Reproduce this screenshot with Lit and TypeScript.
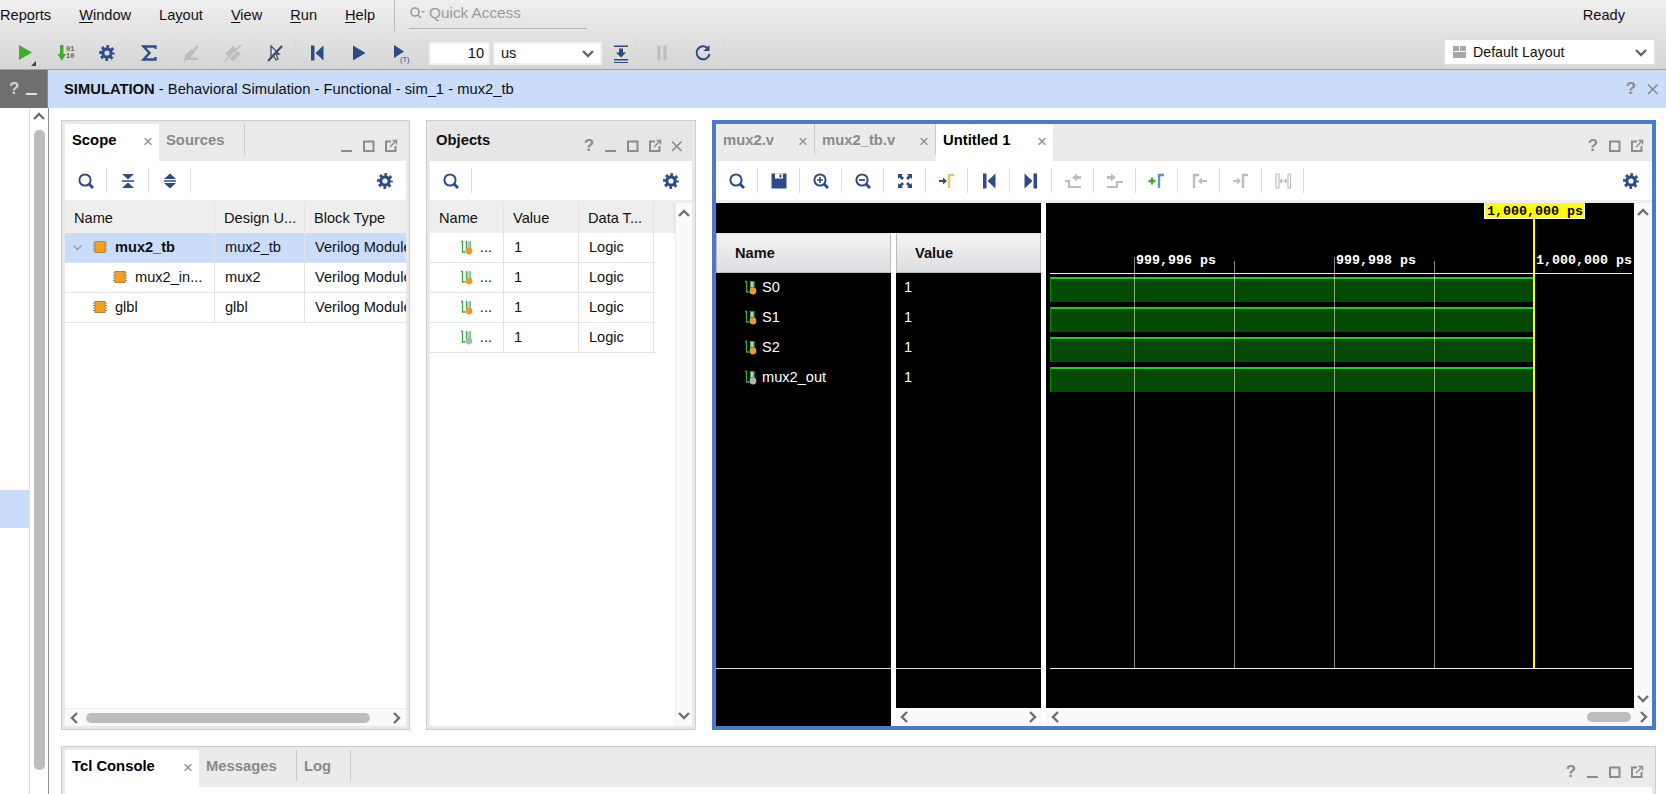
import { LitElement, html, css, svg } from "lit";
import { customElement } from "lit/decorators.js";

const NAVY = "#2d4b86";
const GREY = "#bdbdbd";

const box = (inner: unknown, s = 24) =>
  html`<svg class="ic" width=${s} height=${s} viewBox="0 0 ${s} ${s}">${inner}</svg>`;

const gearS = (c: string) => svg`
  <circle cx="12" cy="12" r="6.4" fill="none" stroke=${c} stroke-width="3" stroke-dasharray="2.6 2.43" stroke-dashoffset="1.3"/>
  <circle cx="12" cy="12" r="4.2" fill="none" stroke=${c} stroke-width="3.2"/>`;
const lens = (extra: unknown = "") => svg`
  <circle cx="11" cy="11" r="5.6" fill="none" stroke=${NAVY} stroke-width="2"/>
  <path d="M15 15l4 4" stroke=${NAVY} stroke-width="2.8"/>${extra}`;

const ICONS: Record<string, () => unknown> = {
  run: () => svg`<path d="M8 4L21 11.5L8 19Z" fill="#3fae2a"/><path d="M25 20v5h-5Z" fill="#444"/>`,
  step: () => svg`<path d="M7 4h3.500v9H13l-4.250 7L4.500 13H7Z" fill="#3fae2a"/>
    <text x="13" y="10" class="mini">01</text><text x="13" y="17" class="mini">10</text>`,
  gear: () => gearS(NAVY),
  sigma: () => svg`<path d="M18.5 8V5.5H6.5L12.5 12L6.5 18.5H18.5V16" fill="none" stroke=${NAVY} stroke-width="2.4"/>`,
  off1: () => svg`<path d="M6 19h13v-2.500H11l5-5-3.500-3.500L6 14Z" fill=${GREY}/><path d="M5 20L19 5" stroke=${GREY} stroke-width="2.200"/>`,
  off2: () => svg`<path d="M4 13l8-8 3.500 2.500-8 8ZM8.500 18l8-8 3.500 2.500-8 8Z" fill=${GREY}/><path d="M4 20L20 4" stroke=${GREY} stroke-width="1.500"/>`,
  cursor: () => svg`<path d="M8 5l8 8h-3l2 5-2 1-3-5-2 2Z" fill="#dfe6f3" stroke=${NAVY} stroke-width="1.3"/><path d="M5 20L19 5" stroke="#4a4a4a" stroke-width="2.2"/>`,
  first: () => svg`<path d="M6 4.5h3.5v15H6ZM18.5 4.5v15L10.5 12Z" fill=${NAVY}/>`,
  last: () => svg`<path d="M18 4.5h-3.5v15H18ZM5.5 4.5v15l8-7.5Z" fill=${NAVY}/>`,
  play: () => svg`<path d="M6 4.5L18.5 12L6 19.5Z" fill=${NAVY}/>`,
  playt: () => svg`<path d="M5 4L15 10.500L5 17Z" fill=${NAVY}/><text x="11" y="21" class="t">(T)</text>`,
  down: () => svg`<path d="M5 4.5h14v1.5H5ZM5 18h14v1.5H5ZM5 21h14v1H5Z" fill=${NAVY}/><path d="M10 7.5h4v4h3l-5 5-5-5h3Z" fill=${NAVY}/>`,
  pause: () => svg`<path d="M7.500 4.500h3v15h-3ZM13.500 4.500h3v15h-3Z" fill=${GREY}/>`,
  reload: () => svg`<path d="M17 7.500A6.500 6.500 0 1 0 18.500 13" fill="none" stroke=${NAVY} stroke-width="2"/><path d="M18.500 4v6h-6Z" fill=${NAVY}/>`,
  search: () => lens(),
  zoomin: () => lens(svg`<path d="M8 11h6M11 8v6" stroke=${NAVY} stroke-width="1.6"/>`),
  zoomout: () => lens(svg`<path d="M8 11h6" stroke=${NAVY} stroke-width="1.8"/>`),
  save: () => svg`<path d="M4.500 4.500h15v15h-15Z" fill=${NAVY}/><path d="M8 4.500h8v5H8Z" fill="#fff"/><path d="M12.500 5.500h2v3h-2Z" fill=${NAVY}/>`,
  fit: () => svg`<path d="M5 5h5l-1.500 1.500L11 9l-2 2-2.500-2.500L5 10ZM19 5v5l-1.500-1.500L15 11l-2-2 2.500-2.500L14 5ZM5 19v-5l1.500 1.500L9 13l2 2-2.500 2.500L10 19ZM19 19h-5l1.500-1.500L13 15l2-2 2.500 2.500L19 14Z" fill=${NAVY}/>`,
  marker: () => svg`<path d="M4 11h4V8.500l4 3.500-4 3.500V13H4Z" fill=${NAVY}/><path d="M14 19V6h5" fill="none" stroke="#e3c766" stroke-width="2.400"/>`,
  prevt: () => svg`<path d="M4 12h4v6h12" fill="none" stroke=${GREY} stroke-width="2.200"/><path d="M20 7h-4V4.500L11 8.500l5 4V10h4Z" fill=${GREY}/>`,
  nextt: () => svg`<path d="M4 18h10v-5h6" fill="none" stroke=${GREY} stroke-width="2.200"/><path d="M4 7h4V4.500l5 4-5 4V10H4Z" fill=${GREY}/>`,
  addm: () => svg`<path d="M3.500 12h7M7 8.500v7" stroke="#3fae2a" stroke-width="2.400"/><path d="M14 19V6h5" fill="none" stroke="#5d94c9" stroke-width="2.400"/>`,
  prevm: () => svg`<path d="M7 19V6h5" fill="none" stroke=${GREY} stroke-width="2.400"/><path d="M20 11h-5V8.500L11 12l4 3.500V13h5Z" fill=${GREY}/>`,
  nextm: () => svg`<path d="M4 11h4V8.500l4 3.500-4 3.500V13H4Z" fill=${GREY}/><path d="M14 19V6h5" fill="none" stroke=${GREY} stroke-width="2.400"/>`,
  swap: () => svg`<path d="M5 5h3v14H5ZM17 5h2.500v14H17Z" fill="none" stroke=${GREY} stroke-width="1.200"/><path d="M9 12h7M9 12l2-2M9 12l2 2M16 12l-2-2M16 12l-2 2" stroke=${GREY} stroke-width="1.200" fill="none"/>`,
  collapse: () => svg`<path d="M6 5h12l-6 5.500ZM6 19h12l-6-5.500Z" fill=${NAVY}/><path d="M6 12h12" stroke=${NAVY} stroke-width="1.500"/>`,
  expand: () => svg`<path d="M12 4.500l6 5.500H6ZM12 19.500L6 14h12Z" fill=${NAVY}/><path d="M6 12h12" stroke=${NAVY} stroke-width="1.500"/>`,
};

const tool = (n: string) => html`<span class="cell">${box(ICONS[n]())}</span>`;
const winIcon = (n: string, c = "#8c8c8c") => {
  const shapes: Record<string, unknown> = {
    help: html`<span class="q" style="color:${c}">?</span>`,
    min: box(svg`<path d="M1 12h11" stroke=${c} stroke-width="2"/>`, 14),
    max: box(svg`<path d="M2 2.500h9.500v9.500H2Z" fill="none" stroke=${c} stroke-width="2"/>`, 14),
    float: box(svg`<path d="M7 2.500H2V12h9.500V7" fill="none" stroke=${c} stroke-width="2"/><path d="M6 8l6-6M8.500 1.500h4v4" stroke=${c} stroke-width="1.400" fill="none"/>`, 14),
    close: box(svg`<path d="M2 2.500l9.500 9.500M11.500 2.500L2 12" stroke=${c} stroke-width="1.700"/>`, 14),
  };
  return html`<span class="win">${shapes[n]}</span>`;
};
const chev = (d: "u" | "d" | "l" | "r", c = "#6f6f6f") => {
  const p = { u: "M2 9l5-5 5 5", d: "M2 5l5 5 5-5", l: "M9 2L4 7l5 5", r: "M5 2l5 5-5 5" }[d];
  return html`<svg class="chev" width="14" height="14" viewBox="0 0 14 14"><path d=${p} fill="none" stroke=${c} stroke-width="2.400"/></svg>`;
};
const chip = html`<svg class="chip" width="14" height="14" viewBox="0 0 14 14">
  <path d="M0 3h14M0 5.500h14M0 8h14M0 10.500h14" stroke="#8f8f7a" stroke-width="1"/>
  <rect x="2" y="1.500" width="10" height="11" fill="#f5a11e" stroke="#a8864a" stroke-width="1"/></svg>`;
const sig = (dot: string) => html`<svg class="sig" width="14" height="16" viewBox="0 0 14 16">
  <path d="M1 2.500h1.500V13H5.500" fill="none" stroke="#37a84a" stroke-width="1.300"/>
  <path d="M6.500 2v9M10 2v9" stroke="#37a84a" stroke-width="1.300"/>
  <path d="M7 2.500h2.500v6H7Z" fill="#c9c9c9"/>
  <circle cx="9" cy="12" r="3.400" fill=${dot}/></svg>`;

interface Tab { label: string; w: number; active?: boolean; close?: boolean; }

const tabs = (list: Tab[]) => html`<div class="tabs">
  ${list.map(
    (t) => html`<div class="tab ${t.active ? "on" : ""}" style="width:${t.w}px">
      <span>${t.label}</span>${t.close ? html`<span class="x">×</span>` : ""}
    </div>`
  )}
</div>`;

@customElement("app-root")
export class AppRoot extends LitElement {
  static styles = css`
    :host { display: block; width: 1666px; height: 794px; overflow: hidden; background: #fff;
      font: 14.6px "Liberation Sans", Arial, sans-serif; color: #111; }
    svg { display: block; overflow: visible; }
    .mini { font: bold 7px "Liberation Mono", monospace; fill: #666; }
    .t { font: 7.500px "Liberation Sans", sans-serif; fill: #2d4b86; }

    .top { height: 69px; background: linear-gradient(#efefef, #d5d5d5); border-bottom: 1px solid #a2a2a2; }
    .menu { height: 33px; box-sizing: border-box; display: flex; align-items: center; gap: 28px; padding: 0 41px 4px 0; }
    .menu u { text-underline-offset: 2px; }
    .sep { width: 1px; height: 33px; align-self: flex-start; background: #bdbdbd; margin-left: -9px; margin-right: -14px; }
    .quick { display: flex; align-items: center; gap: 4px; width: 178px; height: 29px; box-sizing: border-box; padding-bottom: 3px; align-self: flex-start;
      border-bottom: 1px solid #b5b5b5; color: #9a9a9a; font-size: 15.3px; }
    .ready { margin-left: auto; }
    .bar { height: 36px; display: flex; align-items: center; padding: 4px 10px 0 2px; box-sizing: border-box; }
    .bar .cell { width: 42px; height: 30px; border-right-color: #dadada; }
    .field { height: 23px; box-sizing: border-box; background: #fff; border: 2px solid #f1f1f1; display: flex; align-items: center; }
    .num { width: 61px; margin-left: 7px; justify-content: flex-end; padding-right: 4px; }
    .unit { width: 109px; margin: 0 0 0 3px; padding: 0 5px 0 6px; justify-content: space-between; }
    .layout { margin-left: auto; width: 213px; height: 28px; box-sizing: border-box; background: #fff; font-size: 14.2px;
      border: 2px solid #dedede; display: flex; align-items: center; padding: 0 6px 0 8px; gap: 7px; margin-top: -3px; }
    .layout .lab { flex: 1; }
    .lay-ic { width: 13px; height: 12px; display: grid; grid-template-columns: 1fr 1fr; gap: 1px; }
    .lay-ic i { background: #a8a8a8; }
    .lay-ic i:nth-child(3) { grid-column: 1 / 3; }
    .bar .down { width: 30px; margin-left: 4px; }
    .bar .pause { width: 40px; margin-left: 6px; }

    .cell { display: flex; align-items: center; justify-content: center; width: 42px; box-sizing: border-box; border-right: 1px solid #dcdcdc; }

    .band { height: 38px; display: flex; background: #c9ddfb; align-items: center; }
    .dark { width: 48px; height: 38px; background: #6f6f6f; border-right: 1px solid #8a8a8a; display: flex; align-items: center;
      gap: 6px; padding-left: 9px; box-sizing: border-box; flex: none; }
    .title { padding-left: 16px; flex: 1; font-size: 14.75px; }
    .band .end { display: flex; padding-right: 2px; }

    .body { display: flex; height: 686px; }
    .side { width: 49px; flex: none; display: flex; border-right: 1px solid #8d8d8d; box-sizing: border-box; }
    .side-list { width: 30px; padding-top: 382px; box-sizing: border-box; border-right: 1px solid #dedede; }
    .side-sel { height: 38px; background: #c9ddfb; }
    .side-scroll { flex: 1; display: flex; flex-direction: column; align-items: center; background: #fff; padding-top: 2px; }
    .side-thumb { width: 11px; height: 640px; margin-top: 6px; border-radius: 5px; background: #bdbdbd; }

    .main { flex: 1; padding: 12px 10px 0 12px; display: flex; flex-direction: column; gap: 16px; min-width: 0; }
    .cols { display: flex; gap: 16px; height: 610px; flex: none; }
    .panel { box-sizing: border-box; border: 1px solid #cdcdcd; background: #e9e9e9; padding: 3px; display: flex; flex-direction: column; }
    .scope { width: 349px; }
    .objects { width: 270px; }
    .editor { width: 944px; border: 4px solid #4a7bcb; padding: 0; background: #fff; }
    .bottom { height: 100px; flex: none; padding-bottom: 0; }

    .head { height: 37px; flex: none; display: flex; background: #ebebeb; position: relative; }
    .objects .head { background: #e6e6e6; }
    .tabs { display: flex; height: 37px; }
    .tab { box-sizing: border-box; display: flex; padding: 8px 6px 0 7px; justify-content: space-between; align-items: flex-start; font-weight: bold; font-size: 14.8px; color: #8a8a8a;
      border-right: 1px solid #c9c9c9; height: 31px; line-height: 16px; }
    .tab.on { background: #fff; color: #000; height: 37px; border-right: 0; }
    .x { color: #8b8b8b; font-weight: normal; font-size: 17px; line-height: 17px; margin-top: 1px; }
    .winbar { margin-left: auto; display: flex; align-items: flex-end; padding: 0 4px 8px 0; }
    .win { width: 22px; display: flex; justify-content: center; align-items: center; }
    .q { font: bold 17px/14px "Liberation Sans", sans-serif; }
    .ptitle { font-weight: bold; padding: 8px 6px; line-height: 16px; font-size: 14.8px; }

    .tools { height: 42px; box-sizing: border-box; flex: none; background: #fff; border-bottom: 3px solid #eee; display: flex; align-items: center; }
    .tools .cell { height: 25px; }
    .tools .gear { margin-left: auto; border: 0; }

    .tbl { flex: 1; background: #fff; min-height: 0; }
    .row { display: grid; height: 30px; box-sizing: border-box; border-bottom: 1px solid #e2e2e2; white-space: nowrap; overflow: hidden; }
    .row > div { padding-left: 10px; padding-bottom: 1px; box-sizing: border-box; border-right: 1px solid #e2e2e2; display: flex; align-items: center; height: 29px; overflow: hidden; }
    .row.hd { background: #eee; border-bottom: 0; height: 30px; }
    .row.hd > div { height: 30px; padding-left: 9px; padding-bottom: 0; }
    .row.sel { background: #c9ddfb; }
    .row b { font-weight: bold; }
    .tree { gap: 8px; }
    .scope-cols { grid-template-columns: 150px 90px 101px; }
    .scope-cols > div:last-child { border-right: 0; }
    .ind0 { padding-left: 28px !important; }
    .ind1 { padding-left: 48px !important; }
    .exp { padding-left: 7px !important; gap: 6px; }
    .exp .chip { margin-left: 3px; margin-right: 2px; }
    .hs { height: 17px; flex: none; background: #f9f9f9; border-top: 1px solid #eee; display: flex; align-items: center; justify-content: space-between; padding: 0 3px; }
    .hs-track { flex: 1; height: 10px; display: flex; }
    .hs-thumb { width: 284px; margin-left: 4px; height: 10px; border-radius: 5px; background: #bdbdbd; }

    .objwrap { flex: 1; display: flex; background: #fff; min-height: 0; }
    .objtbl { flex: 1; }
    .obj-cols { grid-template-columns: 74px 75px 75px; width: 225px; }
    .obj-cols.hd { grid-template-columns: 74px 75px 75px 21px; width: auto; }
    .objs { padding-left: 0 !important; gap: 6px; justify-content: flex-end; padding-right: 11px; }
    .vs { width: 17px; flex: none; background: #fafafa; border-left: 1px solid #eee; display: flex; flex-direction: column; justify-content: space-between; align-items: center; padding: 4px 0; box-sizing: border-box; }

    .wave { flex: 1; display: flex; min-height: 0; background: #fff; }
    .names { width: 325px; flex: none; display: flex; flex-direction: column; }
    .blackband { height: 30px; flex: none; background: #000; }
    .ngrid { flex: 1; display: grid; grid-template-columns: 175px 145px; column-gap: 5px; min-height: 0; }
    .ncol { display: flex; flex-direction: column; min-height: 0; }
    .nhead { height: 40px; flex: none; box-sizing: border-box; background: linear-gradient(#f3f3f3, #dedee2); border: 1px solid #bdbdbd;
      border-top-color: #e5e5e5; font-weight: bold; display: flex; align-items: center; padding-left: 18px; }
    .nbody { flex: 1; background: #000; color: #fff; position: relative; min-height: 0; }
    .nrow { height: 30px; box-sizing: border-box; padding-bottom: 2px; display: flex; align-items: center; padding-left: 28px; gap: 4px; }
    .vbody .nrow { padding-left: 8px; }
    .line { position: absolute; left: 0; right: 0; top: 395px; height: 1px; background: #ddd; }
    .hsdark { height: 18px; flex: none; background: #f9f9f9; display: flex; justify-content: space-between; align-items: center; padding: 0 2px; }
    .wright { width: 611px; margin-left: 5px; display: flex; flex-direction: column; min-width: 0; }
    .wup { flex: 1; display: flex; min-height: 0; }
    .canvas { width: 588px; flex: none; background: #000; position: relative; overflow: hidden; font: bold 13.33px/16px "Liberation Mono", monospace; color: #fff; }
    .bars { display: flex; flex-direction: column; gap: 5px; padding: 74px 0 0 4px; width: 484px; }
    .bars i { display: block; height: 25px; box-sizing: border-box; background: #044a04; border-top: 2px solid #1ed01e; border-left: 1px solid #0a8a0a; }
    .ruler { position: absolute; left: 4px; width: 582px; top: 70px; height: 1px; background: #eee; }
    .ruler.b { top: 465px; }
    .tick { position: absolute; width: 1px; background: rgba(255,255,255,.55); bottom: 40px; }
    .tlabel { position: absolute; top: 50px; white-space: nowrap; }
    .cursor { position: absolute; left: 487px; width: 2px; top: 16px; height: 449px; background: #ffff00; }
    .cur { position: absolute; left: 438px; top: 0; width: 101px; height: 16px; box-sizing: border-box; background: #ff0; color: #000; border: 1px solid #fff; border-top: 0; padding: 1px 0 0 2px; line-height: 15px; white-space: nowrap; overflow: hidden; }
    .wvs { width: 18px; flex: none; background: #fafafa; display: flex; flex-direction: column; justify-content: space-between; align-items: center; padding: 3px 0; box-sizing: border-box; }
    .whs { height: 18px; flex: none; background: #f9f9f9; display: flex; align-items: center; padding: 0 2px 0 3px; }
    .whs .thumb { margin-left: auto; width: 44px; height: 10px; border-radius: 5px; background: #bdbdbd; margin-right: 5px; }
    .white { background: #fff; flex: 1; }
  `;

  render() {
    const tb1 = ["run", "step", "gear", "sigma", "off1", "off2", "cursor", "first", "play", "playt"];
    const tb2 = ["search", "save", "zoomin", "zoomout", "fit", "marker", "first", "last", "prevt", "nextt", "addm", "prevm", "nextm", "swap"];
    const sigs = [
      ["S0", "#eb9a32"], ["S1", "#eb9a32"], ["S2", "#eb9a32"], ["mux2_out", "#b5b5b5"],
    ];
    const ticks = [
      { x: 88, top: 54 }, { x: 188, top: 58 }, { x: 288, top: 54 }, { x: 388, top: 58 },
    ];
    return html`
      <div class="top">
        <div class="menu">
          <span>Rep<u>o</u>rts</span><span><u>W</u>indow</span><span>La<u>y</u>out</span>
          <span><u>V</u>iew</span><span><u>R</u>un</span><span><u>H</u>elp</span>
          <span class="sep"></span>
          <div class="quick">
            <svg width="16" height="14" viewBox="0 0 16 14"><circle cx="6" cy="6" r="4" fill="none" stroke="#9a9a9a" stroke-width="1.600"/><path d="M9 9l3 3" stroke="#9a9a9a" stroke-width="1.600"/><path d="M12 5h4l-2 2Z" fill="#9a9a9a"/></svg>
            <span>Quick Access</span>
          </div>
          <span class="ready">Ready</span>
        </div>
        <div class="bar">
          ${tb1.map(tool)}
          <div class="field num">10</div>
          <div class="field unit"><span>us</span>${chev("d", "#666")}</div>
          <span class="cell down">${box(ICONS.down())}</span>
          <span class="cell pause">${box(ICONS.pause())}</span>
          <span class="cell">${box(ICONS.reload())}</span>
          <div class="layout">
            <span class="lay-ic"><i></i><i></i><i></i></span>
            <span class="lab">Default Layout</span>${chev("d", "#666")}
          </div>
        </div>
      </div>

      <div class="band">
        <div class="dark">
          <span class="q" style="color:#d0d0d0">?</span>
          ${box(svg`<path d="M1 12h11" stroke="#e2e2e2" stroke-width="2"/>`, 14)}
        </div>
        <div class="title"><b>SIMULATION</b> - Behavioral Simulation - Functional - sim_1 - mux2_tb</div>
        <div class="end">${winIcon("help")}${winIcon("close")}</div>
      </div>

      <div class="body">
        <div class="side">
          <div class="side-list"><div class="side-sel"></div></div>
          <div class="side-scroll">${chev("u")}<div class="side-thumb"></div></div>
        </div>
        <div class="main">
          <div class="cols">
            <section class="panel scope">
              <div class="head">
                ${tabs([{ label: "Scope", w: 94, active: true, close: true }, { label: "Sources", w: 86 }])}
                <div class="winbar">${winIcon("min")}${winIcon("max")}${winIcon("float")}</div>
              </div>
              <div class="tools">${tool("search")}${tool("collapse")}${tool("expand")}<span class="cell gear">${box(gearS(NAVY))}</span></div>
              <div class="tbl">
                <div class="row hd scope-cols"><div>Name</div><div>Design U...</div><div>Block Type</div></div>
                <div class="row sel scope-cols"><div class="exp">${box(svg`<path d="M1.500 4.500l4 4 4-4" fill="none" stroke="#9a9a9a" stroke-width="1.300"/>`, 12)}${chip}<b>mux2_tb</b></div><div>mux2_tb</div><div>Verilog Module</div></div>
                <div class="row scope-cols"><div class="ind1 tree">${chip}<span>mux2_in...</span></div><div>mux2</div><div>Verilog Module</div></div>
                <div class="row scope-cols"><div class="ind0 tree">${chip}<span>glbl</span></div><div>glbl</div><div>Verilog Module</div></div>
              </div>
              <div class="hs">${chev("l")}<div class="hs-track"><div class="hs-thumb"></div></div>${chev("r")}</div>
            </section>

            <section class="panel objects">
              <div class="head">
                <div class="ptitle">Objects</div>
                <div class="winbar">${winIcon("help")}${winIcon("min")}${winIcon("max")}${winIcon("float")}${winIcon("close")}</div>
              </div>
              <div class="tools">${tool("search")}<span class="cell gear">${box(gearS(NAVY))}</span></div>
              <div class="objwrap">
                <div class="objtbl">
                  <div class="row hd obj-cols"><div>Name</div><div>Value</div><div>Data T...</div><div></div></div>
                  ${sigs.map(([, d]) => html`<div class="row obj-cols">
                    <div class="objs">${sig(d)}<span>...</span></div><div>1</div><div>Logic</div></div>`)}
                </div>
                <div class="vs">${chev("u")}${chev("d")}</div>
              </div>
            </section>

            <section class="panel editor">
              <div class="head">
                ${tabs([
                  { label: "mux2.v", w: 99, close: true },
                  { label: "mux2_tb.v", w: 121, close: true },
                  { label: "Untitled 1", w: 117, active: true, close: true },
                ])}
                <div class="winbar">${winIcon("help")}${winIcon("max")}${winIcon("float")}</div>
              </div>
              <div class="tools">${tb2.map(tool)}<span class="cell gear">${box(gearS(NAVY))}</span></div>
              <div class="wave">
                <div class="names">
                  <div class="blackband"></div>
                  <div class="ngrid">
                    <div class="ncol">
                      <div class="nhead">Name</div>
                      <div class="nbody">
                        <div class="line"></div>
                        ${sigs.map(([n, d]) => html`<div class="nrow">${sig(d)}<span>${n}</span></div>`)}
                      </div>
                    </div>
                    <div class="ncol vbody">
                      <div class="nhead">Value</div>
                      <div class="nbody">
                        <div class="line"></div>
                        ${sigs.map(() => html`<div class="nrow"><span>1</span></div>`)}
                      </div>
                      <div class="hsdark">${chev("l")}${chev("r")}</div>
                    </div>
                  </div>
                </div>
                <div class="wright">
                  <div class="wup">
                    <div class="canvas">
                      <div class="bars">${sigs.map(() => html`<i></i>`)}</div>
                      ${ticks.map((t) => html`<span class="tick" style="left:${t.x}px;top:${t.top}px"></span>`)}
                      <span class="tlabel" style="left:90px">999,996 ps</span>
                      <span class="tlabel" style="left:290px">999,998 ps</span>
                      <span class="tlabel" style="left:490px">1,000,000 ps</span>
                      <div class="ruler"></div>
                      <div class="ruler b"></div>
                      <div class="cursor"></div>
                      <div class="cur">1,000,000 ps</div>
                    </div>
                    <div class="wvs">${chev("u")}${chev("d")}</div>
                  </div>
                  <div class="whs">${chev("l")}<div class="thumb"></div>${chev("r")}</div>
                </div>
              </div>
            </section>
          </div>

          <section class="panel bottom">
            <div class="head">
              ${tabs([
                { label: "Tcl Console", w: 134, active: true, close: true },
                { label: "Messages", w: 98 },
                { label: "Log", w: 54 },
              ])}
              <div class="winbar">${winIcon("help")}${winIcon("min")}${winIcon("max")}${winIcon("float")}</div>
            </div>
            <div class="white"></div>
          </section>
        </div>
      </div>
    `;
  }
}
